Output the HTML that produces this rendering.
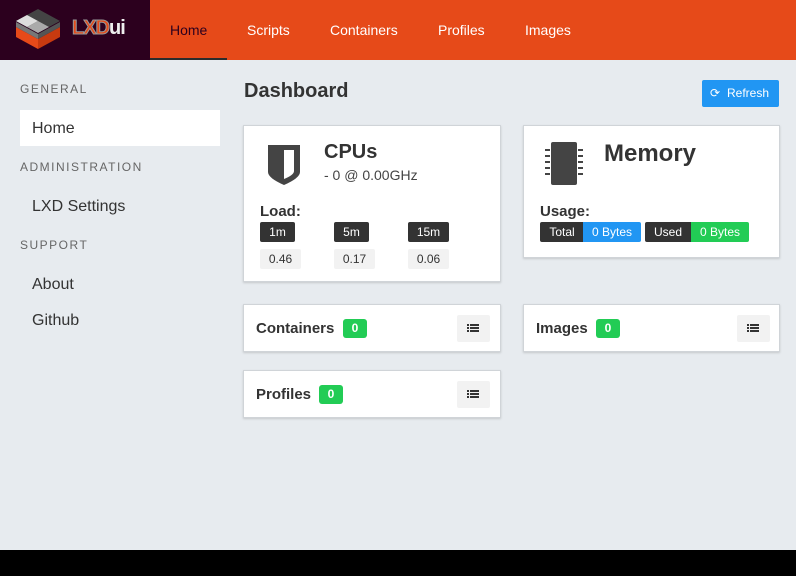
<!DOCTYPE html><html><head><style>
*{box-sizing:border-box;margin:0;padding:0}
body{width:796px;height:576px;overflow:hidden;background:#e7ebef;font-family:"Liberation Sans",sans-serif;color:#333;position:relative}
.hdr{position:absolute;left:0;top:0;width:796px;height:60px;background:#e64a19}
.logo{position:absolute;left:0;top:0;width:150px;height:60px;background:#2c001e}
.lt{position:absolute;left:72px;top:17px;font-size:20px;font-weight:bold;letter-spacing:-1px}
.nav a{position:absolute;top:22px;font-size:14px;color:#fff;text-decoration:none}
.ul{position:absolute;left:150px;top:58px;width:77px;height:2px;background:#2c2c2c}
.side div{position:absolute;font-size:16px;color:#333}
.cap{font-size:12px!important;letter-spacing:1.5px;color:#666!important}
.card{position:absolute;background:#fff;border:1px solid #d0d4d8;box-shadow:0 1px 2px rgba(0,0,0,.15)}
.bd{position:absolute;height:20px;font-size:12px;line-height:20px;text-align:center;border-radius:2px}
.dk{background:#333;color:#fff}.lg{background:#f2f2f2;color:#333}
.cnt{position:absolute;background:#22cc55;color:#fff;font-size:12px;font-weight:bold;width:24px;height:19px;line-height:19px;text-align:center;border-radius:3px}
.lb{position:absolute;width:33px;height:27px;background:#f2f2f2;border-radius:2px}
.t{position:absolute;font-weight:bold;font-size:15px}
</style></head><body>
<div class="hdr"></div>
<div class="logo">
<svg width="50" height="44" style="position:absolute;left:14px;top:7px" viewBox="0 0 50 44">
<polygon points="2,20 24,32 24,42 2,30" fill="#e64a19"/><polygon points="24,32 46,20 46,30 24,42" fill="#c73a10"/>
<polygon points="2,15 24,27 24,32 2,20" fill="#777"/><polygon points="24,27 46,15 46,20 24,32" fill="#555"/>
<polygon points="24,2 46,14 24,26 2,14" fill="#444"/><polygon points="13,8 24,14 13,20 2,14" fill="#ddd"/><polygon points="24,14 35,20 24,26 13,20" fill="#aaa"/>
</svg>
<div class="lt"><span style="color:#e64a19;-webkit-text-stroke:1px #999">LXD</span><span style="color:#eee">ui</span></div>
</div>
<div class="nav"><a style="left:170px;color:#2c001e">Home</a><a style="left:247px">Scripts</a><a style="left:330px">Containers</a><a style="left:438px">Profiles</a><a style="left:525px">Images</a></div>
<div class="ul"></div>
<div class="side">
<div class="cap" style="left:20px;top:82px">GENERAL</div>
<div style="left:20px;top:110px;width:200px;height:36px;background:#fff;padding:10px 12px">Home</div>
<div class="cap" style="left:20px;top:160px">ADMINISTRATION</div>
<div style="left:32px;top:198px">LXD Settings</div>
<div class="cap" style="left:20px;top:238px">SUPPORT</div>
<div style="left:32px;top:276px">About</div>
<div style="left:32px;top:312px">Github</div>
</div>
<div style="position:absolute;left:244px;top:80px;font-size:20px;font-weight:bold">Dashboard</div>
<div style="position:absolute;left:702px;top:80px;width:77px;height:27px;background:#2196f3;border-radius:2px;color:#fff;font-size:12px;line-height:27px;padding-left:25px">Refresh<span style="position:absolute;left:8px;top:0;font-size:12px">⟳</span></div>

<div class="card" style="left:243px;top:125px;width:258px;height:157px">
<svg width="34" height="42" style="position:absolute;left:23px;top:18px" viewBox="0 0 34 42"><path d="M1,1 H33 V28 Q33,34 17,41 Q1,34 1,28 Z" fill="#444"/><path d="M17,6 H27 V27 Q27,31 17,35 Z" fill="#fff"/></svg>
<div style="position:absolute;left:80px;top:15px;font-size:20px;font-weight:bold">CPUs</div>
<div style="position:absolute;left:80px;top:41px;font-size:14px;color:#444">- 0 @ 0.00GHz</div>
<div style="position:absolute;left:16px;top:77px;font-size:15px;font-weight:bold">Load:</div>
<div class="bd dk" style="left:16px;top:96px;width:35px">1m</div>
<div class="bd dk" style="left:90px;top:96px;width:35px">5m</div>
<div class="bd dk" style="left:164px;top:96px;width:41px">15m</div>
<div class="bd lg" style="left:16px;top:123px;width:41px">0.46</div>
<div class="bd lg" style="left:90px;top:123px;width:41px">0.17</div>
<div class="bd lg" style="left:164px;top:123px;width:41px">0.06</div>
</div>

<div class="card" style="left:523px;top:125px;width:257px;height:133px">
<svg width="42" height="44" style="position:absolute;left:19px;top:16px" viewBox="0 0 42 44"><rect x="8" y="0" width="26" height="43" rx="2" fill="#444"/><g fill="#444"><rect x="2" y="7" width="5" height="2"/><rect x="2" y="13" width="5" height="2"/><rect x="2" y="19" width="5" height="2"/><rect x="2" y="25" width="5" height="2"/><rect x="2" y="31" width="5" height="2"/><rect x="35" y="7" width="5" height="2"/><rect x="35" y="13" width="5" height="2"/><rect x="35" y="19" width="5" height="2"/><rect x="35" y="25" width="5" height="2"/><rect x="35" y="31" width="5" height="2"/></g></svg>
<div style="position:absolute;left:80px;top:14px;font-size:24px;font-weight:bold">Memory</div>
<div style="position:absolute;left:16px;top:77px;font-size:15px;font-weight:bold">Usage:</div>
<div class="bd dk" style="left:16px;top:96px;width:44px;border-radius:2px 0 0 2px">Total</div>
<div class="bd" style="left:59px;top:96px;width:58px;background:#2196f3;color:#fff;border-radius:0 2px 2px 0">0 Bytes</div>
<div class="bd dk" style="left:121px;top:96px;width:46px;border-radius:2px 0 0 2px">Used</div>
<div class="bd" style="left:167px;top:96px;width:58px;background:#22cc55;color:#fff;border-radius:0 2px 2px 0">0 Bytes</div>
</div>

<div class="card" style="left:243px;top:304px;width:258px;height:48px"><div class="t" style="left:12px;top:15px">Containers</div><div class="cnt" style="left:99px;top:14px">0</div><div class="lb" style="left:213px;top:10px"></div></div>
<div class="card" style="left:523px;top:304px;width:257px;height:48px"><div class="t" style="left:12px;top:15px">Images</div><div class="cnt" style="left:72px;top:14px">0</div><div class="lb" style="left:213px;top:10px"></div></div>
<div class="card" style="left:243px;top:370px;width:258px;height:48px"><div class="t" style="left:12px;top:15px">Profiles</div><div class="cnt" style="left:75px;top:14px">0</div><div class="lb" style="left:213px;top:10px"></div></div>
<svg width="796" height="576" style="position:absolute;left:0;top:0;pointer-events:none">
<g fill="#333">
<g transform="translate(467,324)"><rect x="0" y="0" width="2" height="2"/><rect x="3" y="0" width="9" height="2"/><rect x="0" y="3" width="2" height="2"/><rect x="3" y="3" width="9" height="2"/><rect x="0" y="6" width="2" height="2"/><rect x="3" y="6" width="9" height="2"/></g>
<g transform="translate(747,324)"><rect x="0" y="0" width="2" height="2"/><rect x="3" y="0" width="9" height="2"/><rect x="0" y="3" width="2" height="2"/><rect x="3" y="3" width="9" height="2"/><rect x="0" y="6" width="2" height="2"/><rect x="3" y="6" width="9" height="2"/></g>
<g transform="translate(467,390)"><rect x="0" y="0" width="2" height="2"/><rect x="3" y="0" width="9" height="2"/><rect x="0" y="3" width="2" height="2"/><rect x="3" y="3" width="9" height="2"/><rect x="0" y="6" width="2" height="2"/><rect x="3" y="6" width="9" height="2"/></g>
</g></svg>
<div style="position:absolute;left:0;top:550px;width:796px;height:26px;background:#000"></div>
</body></html>
